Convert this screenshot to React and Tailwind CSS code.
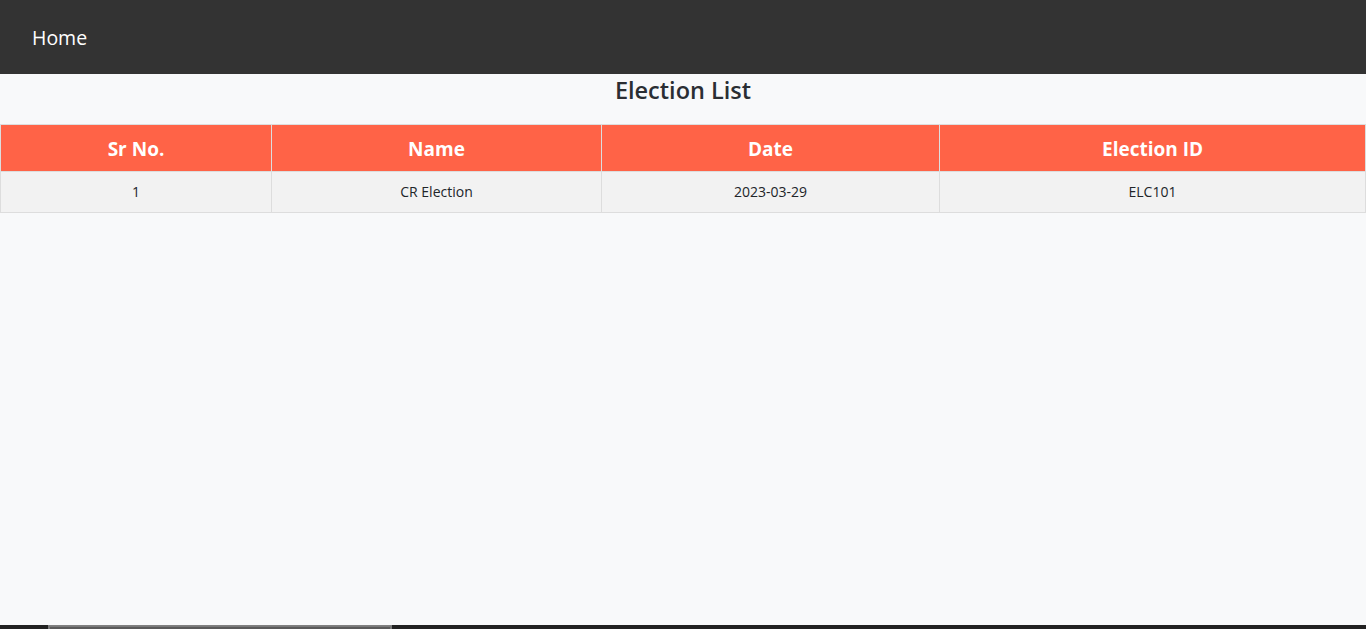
import React from "react";

const elections = [
  { id: 1, name: "CR Election", date: "2023-03-29", electionId: "ELC101" },
];

export default function App() {
  return (
    <div className="min-h-screen bg-[#f8f9fa] text-[#212529]" style={{ fontFamily: '"Open Sans", "Noto Sans", sans-serif' }}>
      <nav className="h-[74px] bg-[#333333] flex items-center px-[32px]">
        <a href="#" className="text-white text-[19.5px] leading-none pt-[1px]">Home</a>
      </nav>

      <h2 className="text-center text-[23.5px] font-semibold text-[#2a2e33] leading-[29px] pt-[2px] mb-[19px]">Election List</h2>

      <table className="w-full border-collapse table-fixed">
        <colgroup>
          <col className="w-[271px]" />
          <col className="w-[330px]" />
          <col className="w-[338px]" />
          <col />
        </colgroup>
        <thead>
          <tr className="bg-[#ff6347] text-white">
            <th className="h-[47px] border border-[#dddddd] text-[19px] font-bold pt-[3px]">Sr No.</th>
            <th className="h-[47px] border border-[#dddddd] text-[19px] font-bold pt-[3px]">Name</th>
            <th className="h-[47px] border border-[#dddddd] text-[19px] font-bold pt-[3px]">Date</th>
            <th className="h-[47px] border border-[#dddddd] text-[19px] font-bold pt-[3px]">Election ID</th>
          </tr>
        </thead>
        <tbody>
          {elections.map((e) => (
            <tr key={e.id} className="bg-[#f2f2f2] text-[14px]">
              <td className="h-[41px] border border-[#dddddd] text-center pb-[2px]">{e.id}</td>
              <td className="h-[41px] border border-[#dddddd] text-center pb-[2px]">{e.name}</td>
              <td className="h-[41px] border border-[#dddddd] text-center pb-[2px]">{e.date}</td>
              <td className="h-[41px] border border-[#dddddd] text-center pb-[2px]">{e.electionId}</td>
            </tr>
          ))}
        </tbody>
      </table>

      {/* horizontal scrollbar strip */}
      <div className="fixed bottom-0 left-0 right-0 h-[4px] bg-[#222222]">
        <div className="absolute left-[48px] top-0 h-[4px] w-[344px] bg-[#7a7a7a] border-t border-[#808080]">
          <div className="h-[3px] mx-[2px] mt-[1px] bg-[#5a5a5a]" />
        </div>
      </div>
    </div>
  );
}
